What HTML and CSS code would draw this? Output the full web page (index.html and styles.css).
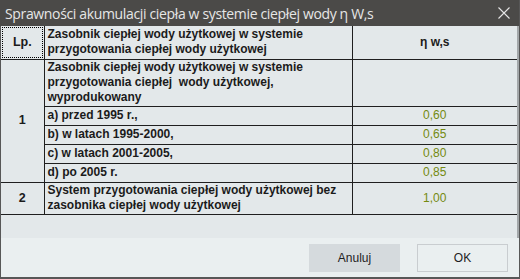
FILE: index.html
```html
<!DOCTYPE html>
<html lang="pl">
<head>
<meta charset="utf-8">
<title>Sprawności akumulacji ciepła</title>
<link rel="stylesheet" href="styles.css">
</head>
<body>
<div class="window">
  <div class="titlebar">
    <span class="title">Sprawności akumulacji ciepła w systemie ciepłej wody η W,s</span>
    <span class="close" aria-label="Zamknij">
      <svg width="12" height="12" viewBox="0 0 12 12"><path d="M0.5 0.5 L11.5 11.5 M11.5 0.5 L0.5 11.5" stroke="#e6e6e6" stroke-width="1.1" fill="none"/></svg>
    </span>
  </div>
  <div class="content">
    <table class="grid">
      <colgroup><col class="c-lp"><col class="c-desc"><col class="c-val"></colgroup>
      <thead>
        <tr class="r-head">
          <th class="lp focus">Lp.</th>
          <th class="desc">Zasobnik ciepłej wody użytkowej w systemie<br>przygotowania ciepłej wody użytkowej</th>
          <th class="val">η w,s</th>
        </tr>
      </thead>
      <tbody>
        <tr class="r-3">
          <td class="lp" rowspan="5">1</td>
          <td class="desc">Zasobnik ciepłej wody użytkowej w systemie<br>przygotowania ciepłej&nbsp; wody użytkowej,<br>wyprodukowany</td>
          <td class="val"></td>
        </tr>
        <tr class="r-1"><td class="desc">a) przed 1995 r.,</td><td class="val">0,60</td></tr>
        <tr class="r-1"><td class="desc">b) w latach 1995-2000,</td><td class="val">0,65</td></tr>
        <tr class="r-1"><td class="desc">c) w latach 2001-2005,</td><td class="val">0,80</td></tr>
        <tr class="r-1"><td class="desc">d) po 2005 r.</td><td class="val">0,85</td></tr>
        <tr class="r-2">
          <td class="lp">2</td>
          <td class="desc">System przygotowania ciepłej wody użytkowej bez<br>zasobnika ciepłej wody użytkowej</td>
          <td class="val">1,00</td>
        </tr>
      </tbody>
    </table>
  </div>
  <div class="footer">
    <button class="btn btn-cancel">Anuluj</button>
    <button class="btn btn-ok">OK</button>
  </div>
</div>
</body>
</html>
```

FILE: styles.css
```css
html, body {
  margin: 0;
  padding: 0;
}

.window {
  width: 520px;
  height: 279px;
  box-sizing: border-box;
  border: 1px solid #575757;
  border-top: 0;
  border-bottom-width: 2px;
  display: flex;
  flex-direction: column;
  background: #eaeff0;
  font-family: "Liberation Sans", Arial, sans-serif;
}

.titlebar {
  flex: none;
  height: 26px;
  background: #4b4a48;
  display: flex;
  align-items: center;
  justify-content: space-between;
  padding-left: 5px;
  margin-left: -1px;
}

.title {
  color: #e6e6e6;
  font-family: "Open Sans", sans-serif;
  font-size: 14px;
  letter-spacing: -0.35px;
  white-space: nowrap;
}

.close {
  width: 30px;
  height: 26px;
  display: flex;
  align-items: center;
  justify-content: center;
}

.content {
  flex: 1;
  background: #e3e8ea;
  border-right: 2px solid #a3a7a9;
}

.grid {
  border-collapse: collapse;
  table-layout: fixed;
  width: 516px;
  border-top: hidden;
  border-left: hidden;
  border-right: hidden;
  font-size: 12px;
  line-height: 15px;
  color: #1b1b1b;
}

.c-lp { width: 43px; }
.c-desc { width: 308px; }
.c-val { width: 165px; }

.grid th,
.grid td {
  border: 1px solid #1f1f1f;
  padding: 0 3px;
  vertical-align: middle;
  font-weight: bold;
}

.grid .lp {
  text-align: center;
  font-size: 12.5px;
}

.grid .desc {
  text-align: left;
}

.grid .val {
  text-align: center;
}

.grid td.val {
  font-weight: normal;
  color: #748a10;
}

.grid .focus {
  outline: 1px dotted #000;
  outline-offset: -2px;
}

.r-head { height: 33px; }
.r-3 { height: 47px; }
.r-1 { height: 19px; }
.r-2 { height: 32px; }

.footer {
  flex: none;
  height: 39px;
  box-sizing: border-box;
  display: flex;
  justify-content: flex-end;
  align-items: flex-start;
  gap: 17px;
  padding: 6px 11px 0 0;
}

.btn {
  width: 91px;
  height: 28px;
  font-family: "Liberation Sans", Arial, sans-serif;
  font-size: 12px;
  color: #1e1e1e;
  border: 1px solid transparent;
  padding: 0;
}

.btn-cancel {
  background: #d5dadd;
}

.btn-ok {
  background: #eaeff0;
  border-color: #c9cdd0;
}
```
